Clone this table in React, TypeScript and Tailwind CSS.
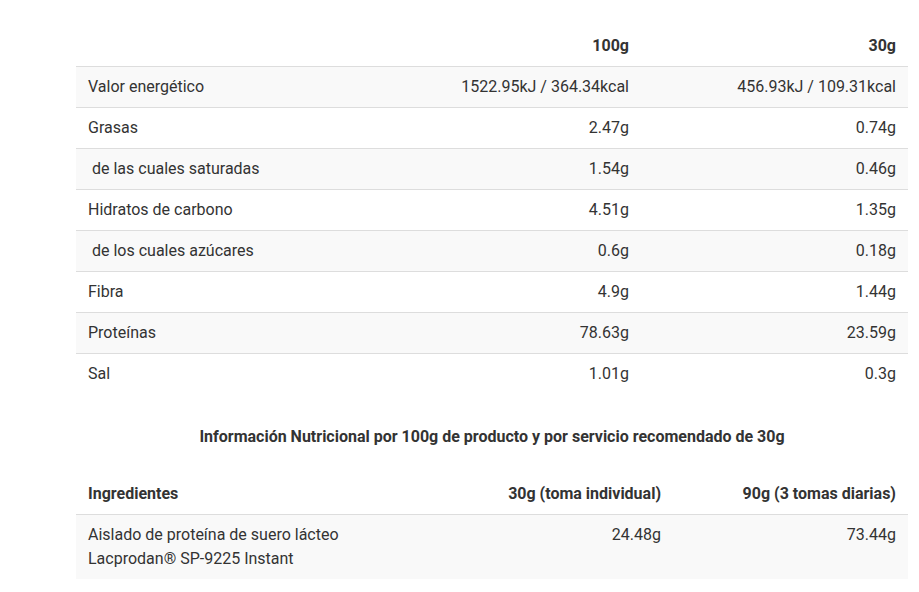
import React from "react";

type Row = { name: string; a: string; b: string; indent?: boolean };

const nutrition: Row[] = [
  { name: "Valor energético", a: "1522.95kJ / 364.34kcal", b: "456.93kJ / 109.31kcal" },
  { name: "Grasas", a: "2.47g", b: "0.74g" },
  { name: "de las cuales saturadas", a: "1.54g", b: "0.46g", indent: true },
  { name: "Hidratos de carbono", a: "4.51g", b: "1.35g" },
  { name: "de los cuales azúcares", a: "0.6g", b: "0.18g", indent: true },
  { name: "Fibra", a: "4.9g", b: "1.44g" },
  { name: "Proteínas", a: "78.63g", b: "23.59g" },
  { name: "Sal", a: "1.01g", b: "0.3g" },
];

export default function App() {
  return (
    <div
      className="min-h-screen bg-white pt-[26px] pl-[76px] text-[16px] leading-6 text-[#333]"
      style={{ fontFamily: "Roboto, 'Liberation Sans', sans-serif" }}
    >
      <div className="w-[832px]">
        {/* Nutrition table */}
        <table className="w-full table-fixed border-collapse">
          <colgroup>
            <col className="w-[299px]" />
            <col className="w-[266px]" />
            <col className="w-[267px]" />
          </colgroup>
          <thead>
            <tr className="border-b border-[#dddddd]">
              <th className="px-3 py-2 text-left font-bold"></th>
              <th className="px-3 py-2 text-right font-bold">100g</th>
              <th className="px-3 py-2 text-right font-bold">30g</th>
            </tr>
          </thead>
          <tbody>
            {nutrition.map((r, i) => (
              <tr
                key={r.name}
                className={
                  (i % 2 === 0 ? "bg-[#f9f9f9] " : "bg-white ") +
                  (i < nutrition.length - 1 ? "border-b border-[#dddddd]" : "")
                }
              >
                <td className="px-3 py-2 text-left">
                  {r.indent ? "\u00a0" : ""}
                  {r.name}
                </td>
                <td className="px-3 py-2 text-right">{r.a}</td>
                <td className="px-3 py-2 text-right">{r.b}</td>
              </tr>
            ))}
          </tbody>
        </table>

        <p className="mt-[31px] text-center font-bold">
          Información Nutricional por 100g de producto y por servicio recomendado de 30g
        </p>

        {/* Ingredients table */}
        <table className="mt-[25px] w-full table-fixed border-collapse">
          <colgroup>
            <col className="w-[290px]" />
            <col className="w-[307px]" />
            <col className="w-[235px]" />
          </colgroup>
          <thead>
            <tr className="border-b border-[#dddddd]">
              <th className="px-3 py-2 text-left font-bold">Ingredientes</th>
              <th className="px-3 py-2 text-right font-bold">30g (toma individual)</th>
              <th className="px-3 py-2 text-right font-bold">90g (3 tomas diarias)</th>
            </tr>
          </thead>
          <tbody>
            <tr className="bg-[#f9f9f9] align-top">
              <td className="px-3 py-2 text-left">
                Aislado de proteína de suero lácteo Lacprodan® SP-9225 Instant
              </td>
              <td className="px-3 py-2 text-right">24.48g</td>
              <td className="px-3 py-2 text-right">73.44g</td>
            </tr>
          </tbody>
        </table>
      </div>
    </div>
  );
}
